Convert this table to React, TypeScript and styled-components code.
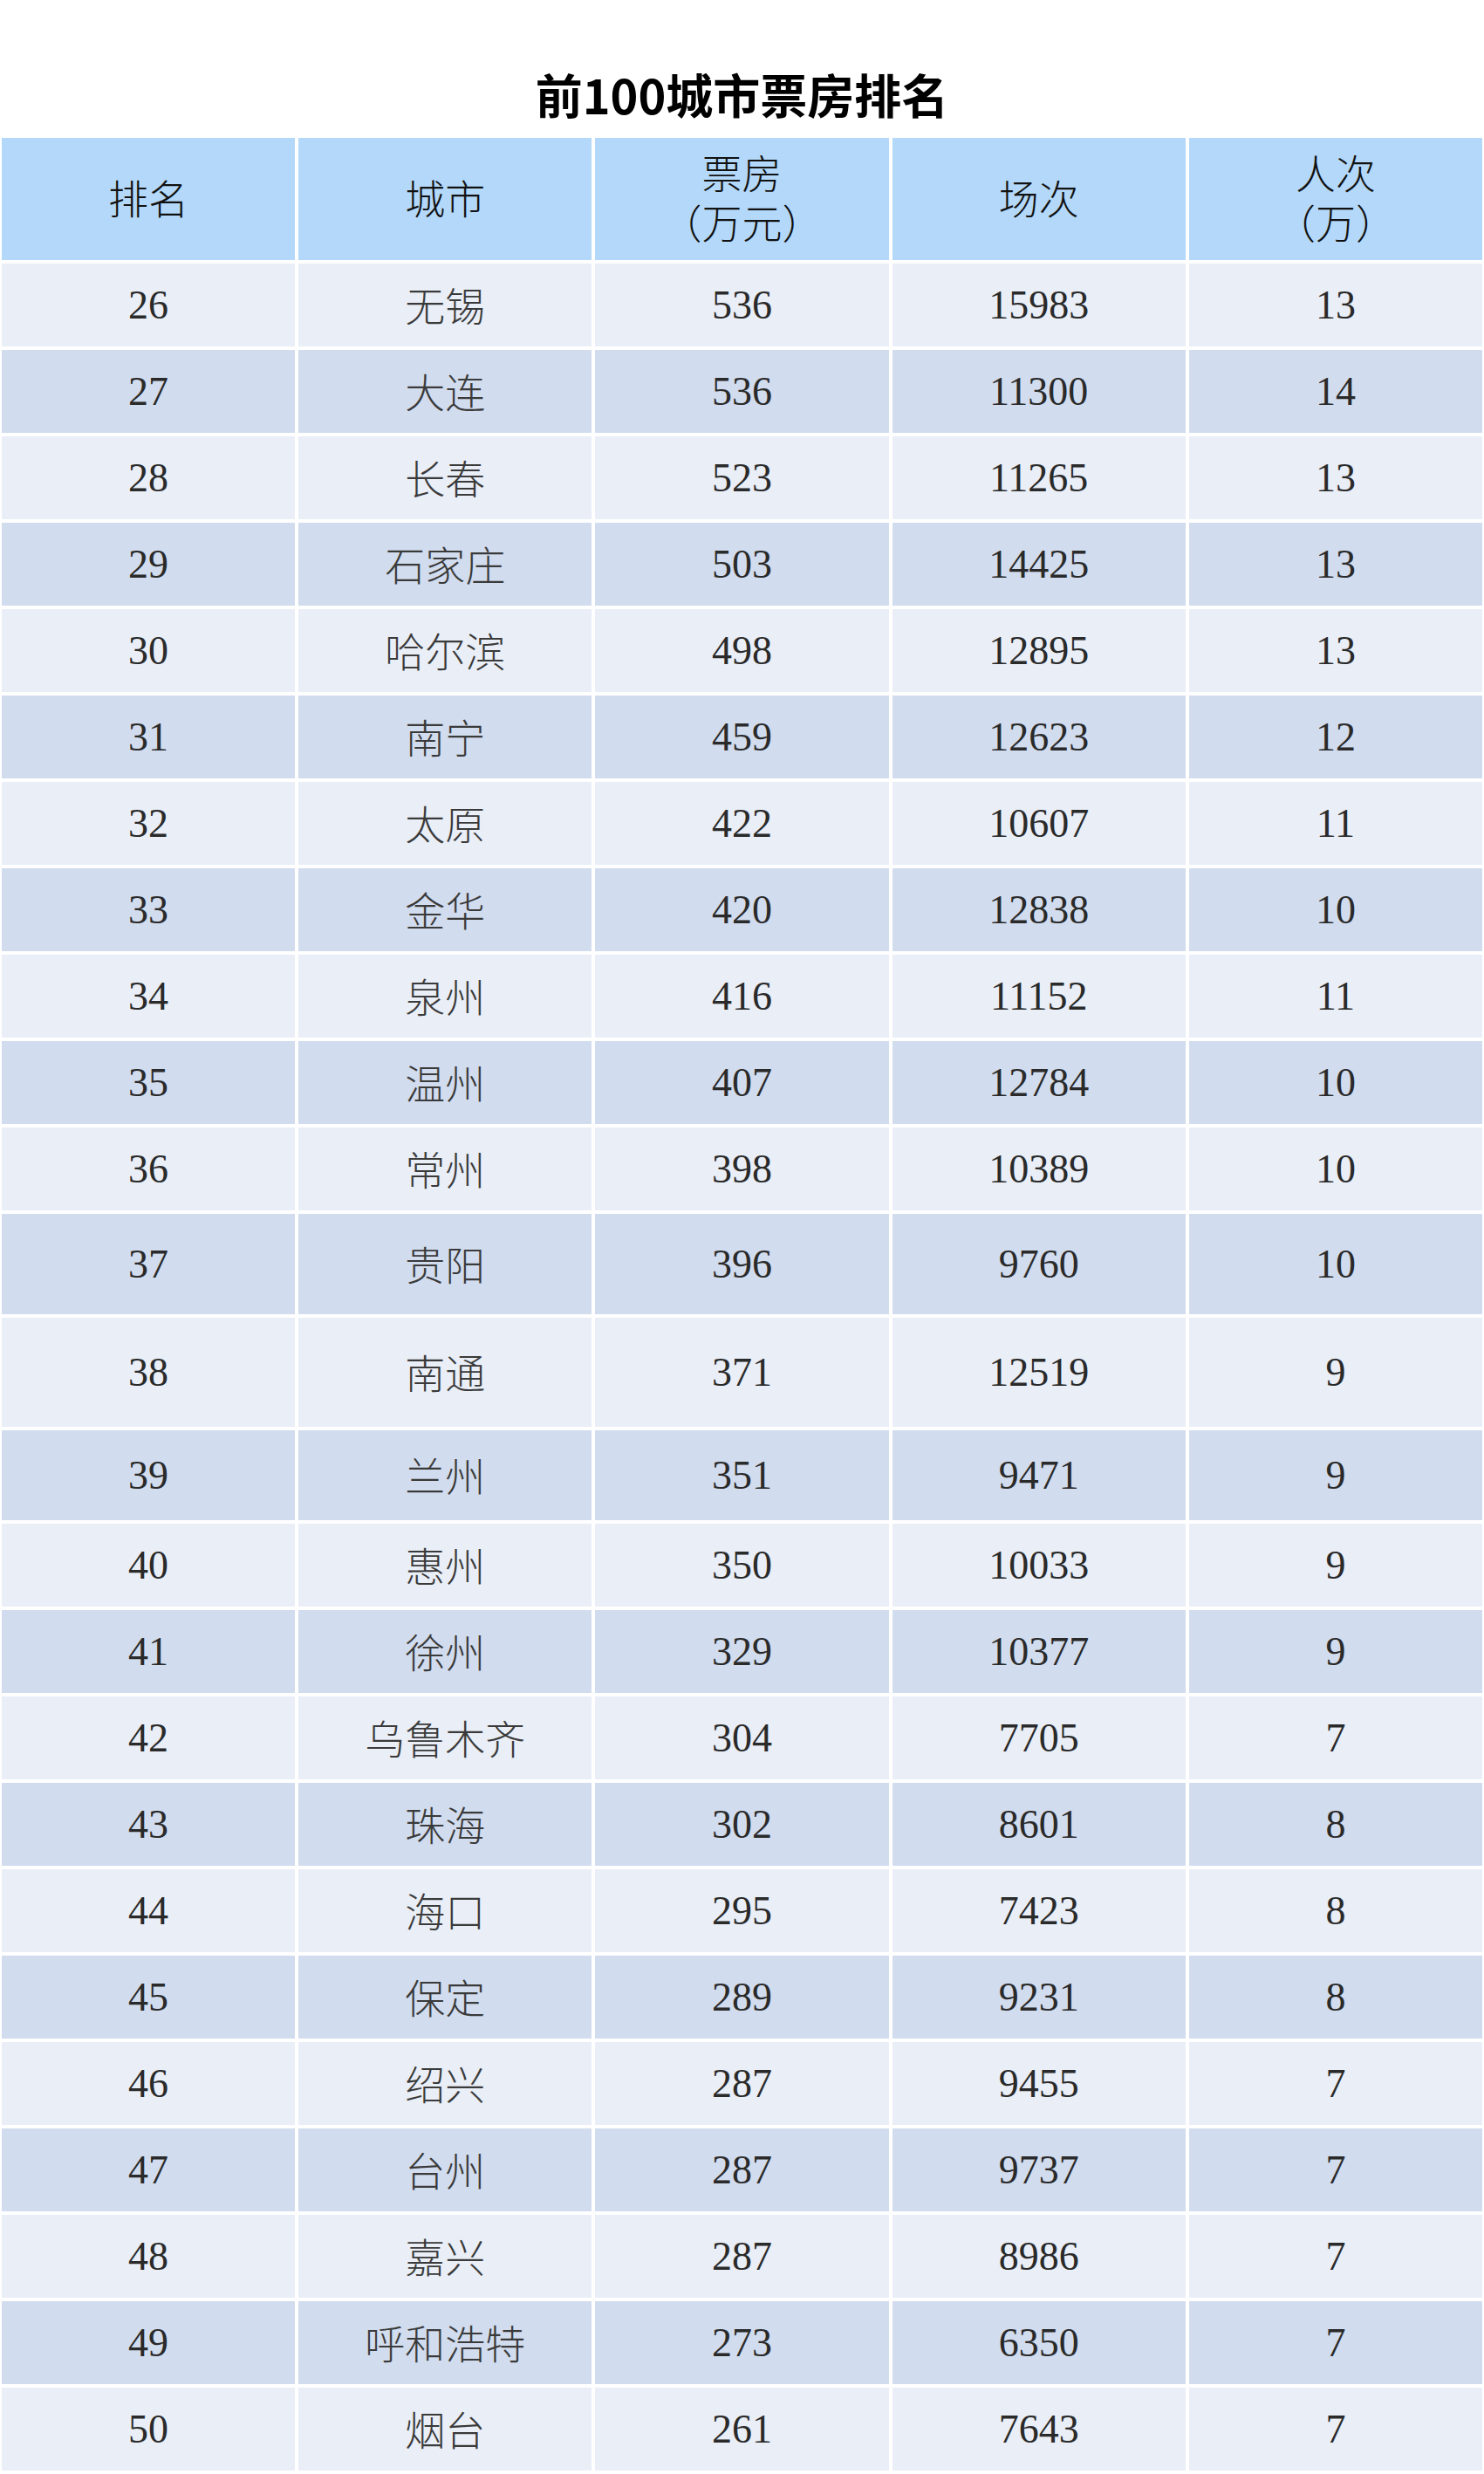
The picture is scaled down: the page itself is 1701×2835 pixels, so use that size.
import React from "react";
import styled, { createGlobalStyle } from "styled-components";

const GlobalStyle = createGlobalStyle`
    html, body {
        margin: 0;
        padding: 0;
        background: #fff;
    }
    body {
        font-family: "Liberation Serif", "Noto Sans CJK SC", serif;
    }
`

const Page = styled.div`
    width: 1701px;
    background: #fff;
`

const Title = styled.h1`
    margin: 0;
    height: 158px;
    box-sizing: border-box;
    padding-top: 78px;
    font-family: "Noto Sans CJK SC", "Noto Sans", sans-serif;
    font-size: 54px;
    line-height: 60px;
    font-weight: 700;
    color: #000;
    text-align: center;
`

const Table = styled.div`
    display: flex;
    flex-direction: column;
    gap: 4px;
    padding: 0 2px;
`

const Row = styled.div<{ $height: number }>`
    display: grid;
    grid-template-columns: repeat(5, 1fr);
    column-gap: 4px;
    height: ${p => p.$height}px;
`

const HeadCell = styled.div`
    display: flex;
    flex-direction: column;
    align-items: center;
    justify-content: center;
    gap: 4px;
    background: #b3d8f9;
    color: #111;
    font-family: "Noto Sans CJK SC", sans-serif;
    font-size: 46px;
    font-weight: 300;
`

const HeadLine = styled.span`
    display: block;
    line-height: 53px;
    white-space: nowrap;
    transform: translateY(-3px);
`

const Cell = styled.div<{ $dark: boolean }>`
    display: flex;
    align-items: center;
    justify-content: center;
    background: ${p => (p.$dark ? "#d1dcee" : "#e9eef7")};
    color: #2a2a2a;
    font-family: "Liberation Serif", "Noto Sans CJK SC", serif;
    font-size: 46px;
`

const CityName = styled.span`
    display: block;
    font-family: "Noto Sans CJK SC", sans-serif;
    line-height: 1;
    color: #3a3a3a;
    font-weight: 300;
    transform: translateY(-2px);
`

type Item = [number, string, number, number, number]

const rows: Item[] = [
    [26, "无锡", 536, 15983, 13],
    [27, "大连", 536, 11300, 14],
    [28, "长春", 523, 11265, 13],
    [29, "石家庄", 503, 14425, 13],
    [30, "哈尔滨", 498, 12895, 13],
    [31, "南宁", 459, 12623, 12],
    [32, "太原", 422, 10607, 11],
    [33, "金华", 420, 12838, 10],
    [34, "泉州", 416, 11152, 11],
    [35, "温州", 407, 12784, 10],
    [36, "常州", 398, 10389, 10],
    [37, "贵阳", 396, 9760, 10],
    [38, "南通", 371, 12519, 9],
    [39, "兰州", 351, 9471, 9],
    [40, "惠州", 350, 10033, 9],
    [41, "徐州", 329, 10377, 9],
    [42, "乌鲁木齐", 304, 7705, 7],
    [43, "珠海", 302, 8601, 8],
    [44, "海口", 295, 7423, 8],
    [45, "保定", 289, 9231, 8],
    [46, "绍兴", 287, 9455, 7],
    [47, "台州", 287, 9737, 7],
    [48, "嘉兴", 287, 8986, 7],
    [49, "呼和浩特", 273, 6350, 7],
    [50, "烟台", 261, 7643, 7],
]

// a few rows in the source sheet are taller than the rest
const tallRows: Record<number, number> = { 37: 115, 38: 125, 39: 103 }

const headers: string[][] = [
    ["排名"],
    ["城市"],
    ["票房", "（万元）"],
    ["场次"],
    ["人次", "（万）"],
]

export default function App() {
    return (
        <Page>
            <GlobalStyle />
            <Title>前100城市票房排名</Title>
            <Table>
                <Row $height={140}>
                    {headers.map(lines => (
                        <HeadCell key={lines[0]}>
                            {lines.map(l => <HeadLine key={l}>{l}</HeadLine>)}
                        </HeadCell>
                    ))}
                </Row>
                {rows.map(([rank, city, box, shows, people], i) => {
                    const dark = i % 2 === 1
                    return (
                        <Row key={rank} $height={tallRows[rank] ?? 95}>
                            <Cell $dark={dark}>{rank}</Cell>
                            <Cell $dark={dark}><CityName>{city}</CityName></Cell>
                            <Cell $dark={dark}>{box}</Cell>
                            <Cell $dark={dark}>{shows}</Cell>
                            <Cell $dark={dark}>{people}</Cell>
                        </Row>
                    )
                })}
            </Table>
        </Page>
    )
}
